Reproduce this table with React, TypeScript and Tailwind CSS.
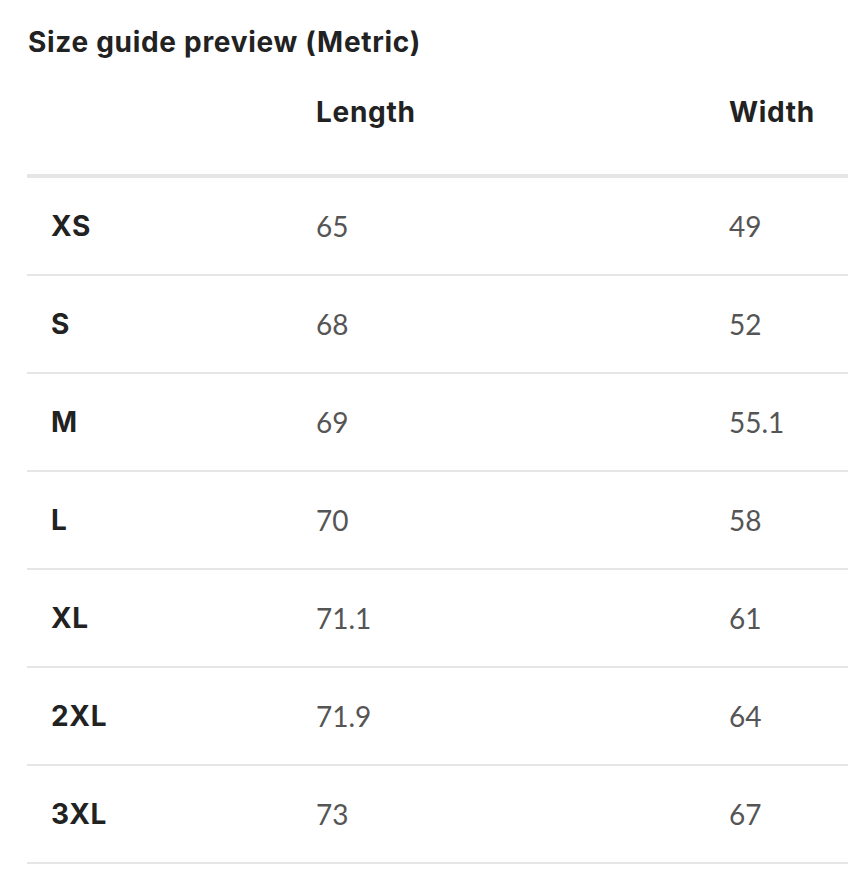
import React from "react";

const rows: [string, string, string][] = [
  ["XS", "65", "49"],
  ["S", "68", "52"],
  ["M", "69", "55.1"],
  ["L", "70", "58"],
  ["XL", "71.1", "61"],
  ["2XL", "71.9", "64"],
  ["3XL", "73", "67"],
];

const bold = { fontFamily: "Inter, 'Noto Sans', sans-serif" };

export default function App() {
  return (
    <div
      className="w-[848px] h-[872px] overflow-hidden bg-white text-[#222222]"
      style={{ fontFamily: "Lato, 'Noto Sans', sans-serif" }}
    >
      <div className="h-[84px] flex items-center pl-[28px]">
        <h2 className="text-[28px] leading-[28px] font-bold tracking-[0.7px]" style={bold}>
          Size guide preview (Metric)
        </h2>
      </div>
      <div className="pl-[27px]">
        <div className="w-[900px]">
          <div className="flex h-[94px] pb-[34px] border-b-4 border-[#e6e6e6]">
            <div className="w-[265px]" />
            <div className="w-[413px] pl-6 flex items-center text-[28px] font-bold tracking-[0.7px]" style={bold}>
              Length
            </div>
            <div className="flex-1 pl-6 flex items-center text-[28px] font-bold tracking-[0.7px]" style={bold}>
              Width
            </div>
          </div>
          {rows.map(([size, len, wid]) => (
            <div key={size} className="flex h-[98px] border-b-2 border-[#e6e6e6]">
              <div className="w-[265px] pl-6 flex items-center text-[28px] font-bold tracking-[0.7px]" style={bold}>
                {size}
              </div>
              <div className="w-[413px] pl-6 flex items-center text-[28px] text-[#555555]">{len}</div>
              <div className="flex-1 pl-6 flex items-center text-[28px] text-[#555555]">{wid}</div>
            </div>
          ))}
        </div>
      </div>
    </div>
  );
}
